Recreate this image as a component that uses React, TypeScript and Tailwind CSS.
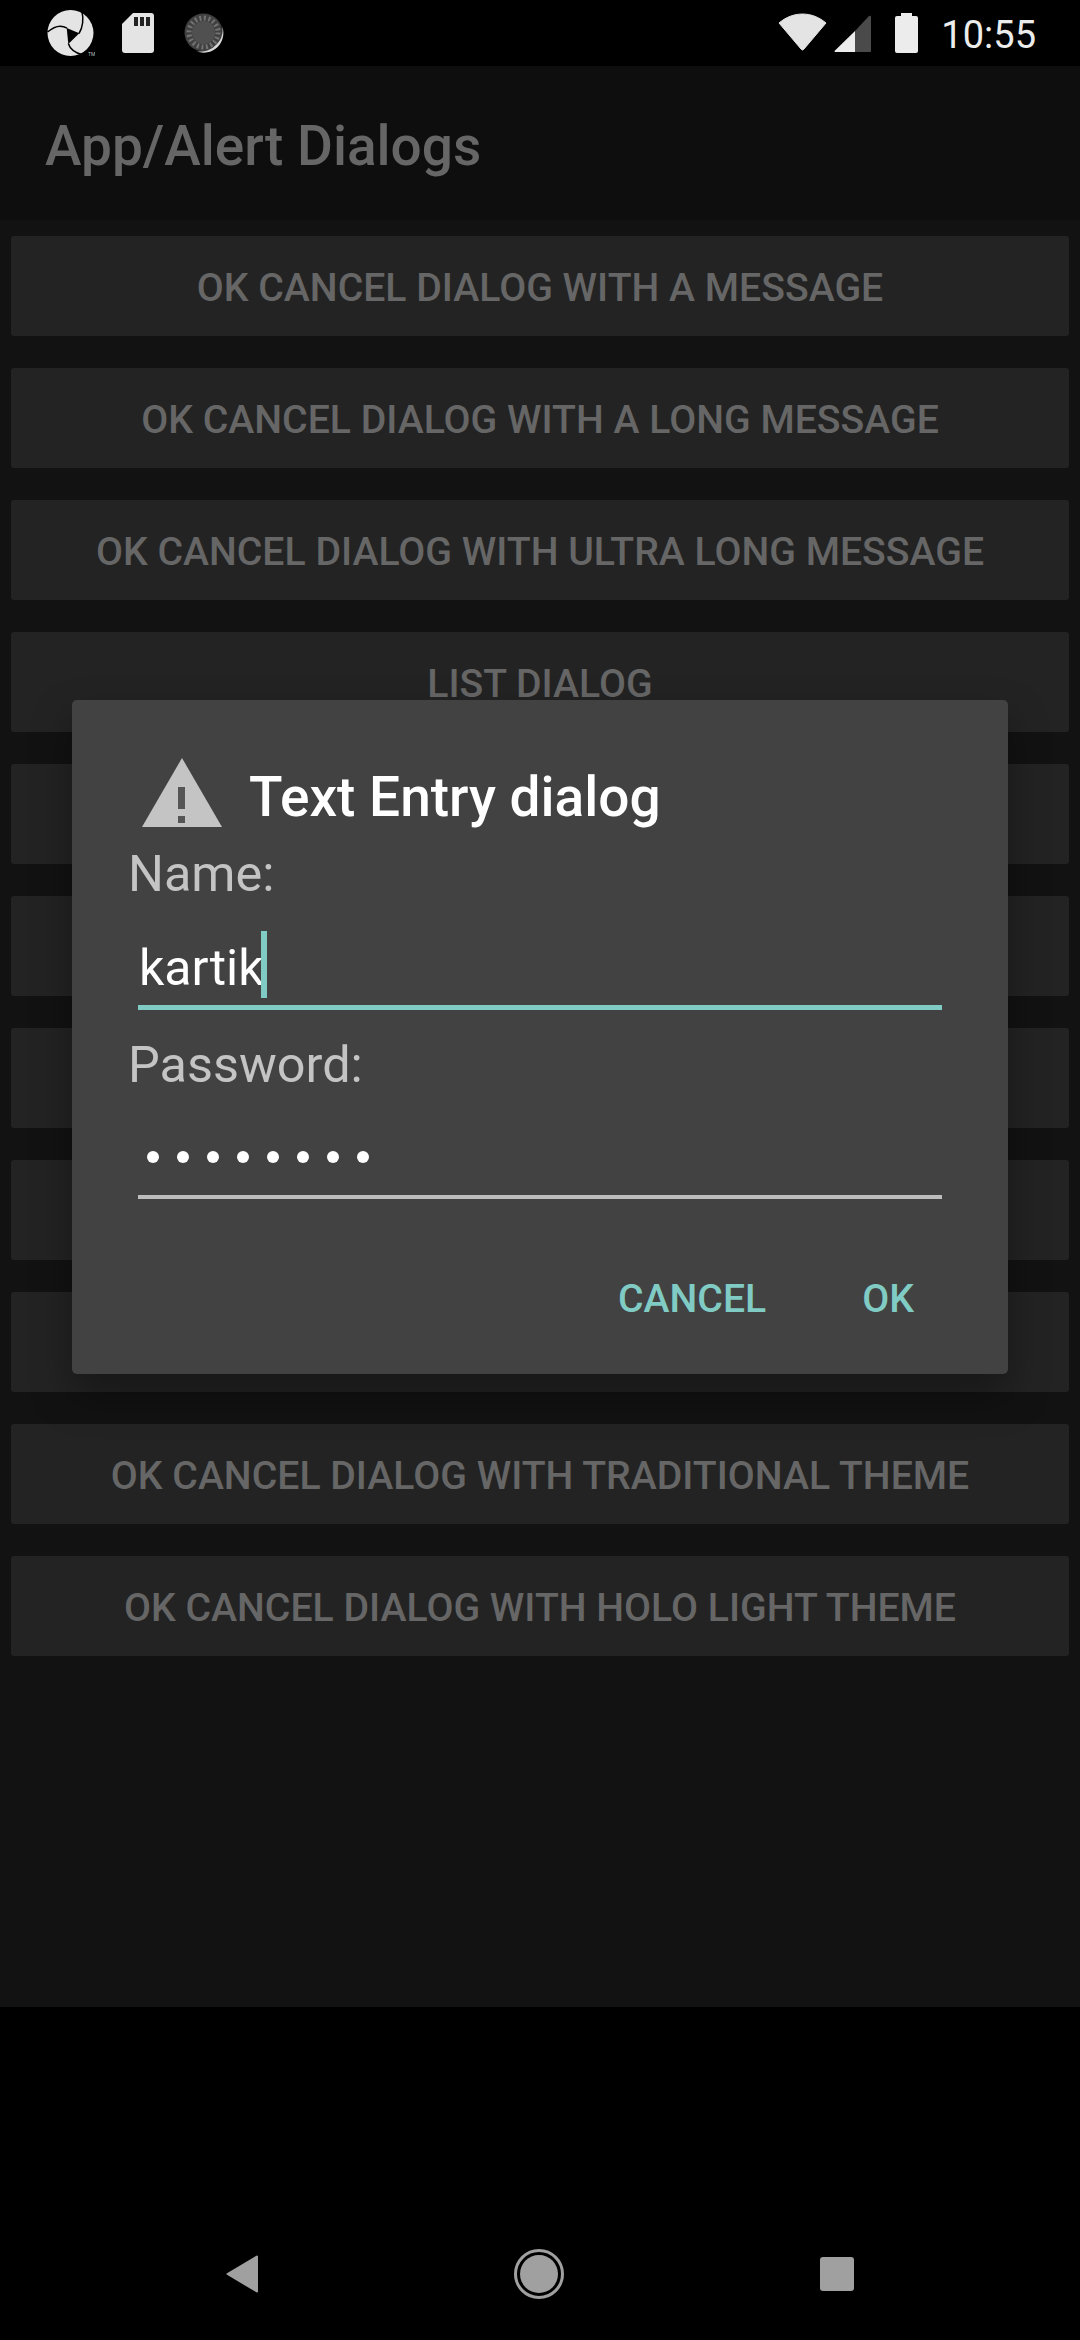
import React from 'react';

// labels 5-9 sit behind the dialog, so those buttons stay empty
const BUTTONS = [
  'OK Cancel dialog with a message',
  'OK Cancel dialog with a long message',
  'OK Cancel dialog with ultra long message',
  'List dialog',
  '',
  '',
  '',
  '',
  '',
  'OK Cancel dialog with traditional theme',
  'OK Cancel dialog with Holo Light theme',
];

function StatusBar() {
  return (
    <div className="flex h-[66px] items-center justify-between bg-black pl-[47px] pr-[44px]">
      <div className="flex items-center">
        {/* app logo */}
        <svg width="48" height="48" viewBox="0 0 48 48">
          <circle cx="23.5" cy="24" r="23" fill="#e4e4e4" />
          <path d="M19.7 19 L32.3 24.3 L21.3 35 Z" fill="#000" />
          <path d="M32 24.5 C36 18 37 11 34.7 1" fill="none" stroke="#000" strokeWidth="1.5" />
          <path d="M20 19.2 C14 15.5 8 16.5 0.5 23" fill="none" stroke="#000" strokeWidth="1.5" />
          <path d="M21.3 34.5 C23 40 28 44 36 46" fill="none" stroke="#000" strokeWidth="1.5" />
          <text x="41" y="47" fontSize="5" fill="#bbb" fontFamily="Roboto, sans-serif">TM</text>
        </svg>
        {/* sd card */}
        <svg width="32" height="40" viewBox="0 0 32 40" className="ml-[27px]">
          <path d="M11 0 H29 a3 3 0 0 1 3 3 V37 a3 3 0 0 1 -3 3 H3 a3 3 0 0 1 -3 -3 V11 Z" fill="#e4e4e4" />
          <rect x="12" y="4" width="4" height="9" fill="#222" />
          <rect x="18" y="4" width="4" height="9" fill="#222" />
          <rect x="24" y="4" width="4" height="9" fill="#222" />
        </svg>
        {/* spinner */}
        <svg width="40" height="40" viewBox="0 0 40 40" className="ml-[30px]">
          <circle cx="19.5" cy="19.5" r="19" fill="#404040" />
          <circle cx="19.5" cy="19.5" r="14.5" fill="none" stroke="#727272" strokeWidth="5" strokeDasharray="2 2.55" />
          <circle cx="19.5" cy="19.5" r="11.5" fill="#505050" />
          <path d="M38 13 A19.5 19.5 0 0 1 12 38 A21 21 0 0 0 33 31 A20 20 0 0 0 38 13 Z" fill="#d8d8d8" />
        </svg>
      </div>
      <div className="flex items-center">
        {/* wifi */}
        <svg width="49" height="38" viewBox="0 0 49 38" className="mt-[-2px]">
          <path d="M1 10 C15 -2 34 -2 48 10 L26 36 Q24.5 38 23 36 Z" fill="#e4e4e4" stroke="#e4e4e4" strokeWidth="1" strokeLinejoin="round" />
        </svg>
        {/* signal */}
        <svg width="37" height="37" viewBox="0 0 37 37" className="ml-[7px]">
          <path d="M21 16 L35 1 Q37 0 37 2 V36 Q37 37 36 37 H21 Z" fill="#4a4a4a" />
          <path d="M21 16 V37 H1 Q0 37 1 35.5 Z" fill="#ececec" />
        </svg>
        {/* battery */}
        <svg width="23" height="40" viewBox="0 0 23 40" className="ml-[24px]">
          <path d="M6 0 H17 V3 H21 a2 2 0 0 1 2 2 V38 a2 2 0 0 1 -2 2 H2 a2 2 0 0 1 -2 -2 V5 a2 2 0 0 1 2 -2 H6 Z" fill="#ececec" />
        </svg>
        <span className="ml-[23px] mt-[3px] text-[38px] leading-[44px] text-[#ececec]">10:55</span>
      </div>
    </div>
  );
}

function NavBar() {
  return (
    <div className="flex h-[333px] items-start justify-center bg-black pt-[242px]">
      <div className="flex w-[628px] items-center justify-between">
        <svg width="32" height="38" viewBox="0 0 32 38">
          <path d="M31 1.5 L1.5 19 L31 36.5 Z" fill="#a0a0a0" stroke="#a0a0a0" strokeWidth="2" strokeLinejoin="round" />
        </svg>
        <svg width="50" height="50" viewBox="0 0 50 50">
          <circle cx="25" cy="25" r="23.5" fill="none" stroke="#a0a0a0" strokeWidth="3" />
          <circle cx="25" cy="25" r="19" fill="#a0a0a0" />
        </svg>
        <div className="h-[34px] w-[34px] rounded-[3px] bg-[#a0a0a0]" />
      </div>
    </div>
  );
}

function TextEntryDialog() {
  return (
    <div className="absolute left-[72px] top-[700px] flex h-[674px] w-[936px] flex-col rounded-[5px] bg-[#424242] shadow-[0_20px_40px_rgba(0,0,0,0.35)]">
      <div className="flex items-start pl-[70px] pt-[58px]">
        <svg width="80" height="70" viewBox="0 0 80 70">
          <path d="M0 69 L40 0 L80 69 Z" fill="#c4c4c4" />
          <rect x="36" y="29" width="7" height="22" fill="#555" />
          <rect x="36" y="58" width="7" height="7" fill="#555" />
        </svg>
        <span className="ml-[27px] mt-[4px] text-[55px] font-medium leading-[70px] text-white">Text Entry dialog</span>
      </div>

      <div className="mt-[14px] pl-[56px] text-[50.4px] leading-[56px] text-[#c4c4c4]">Name:</div>
      <div className="mx-[66px] mt-[22px] flex h-[81px] items-center pl-[1px]">
        <span className="mt-[6px] text-[50px] leading-[66px] text-white">kartik</span>
        <span className="ml-[-3px] h-[67px] w-[6px] bg-[#80cbc4]" />
      </div>
      <div className="mx-[66px] h-[5px] bg-[#80cbc4]" />

      <div className="mt-[27px] pl-[56px] text-[50.4px] leading-[56px] text-[#c4c4c4]">Password:</div>
      <div className="mx-[66px] mt-[20px] flex h-[82px] items-center pl-[9px]">
        <div className="mt-[6px] flex gap-[18px]">
          {Array.from({ length: 8 }).map((_, i) => (
            <span key={i} className="h-[12px] w-[12px] rounded-full bg-white" />
          ))}
        </div>
      </div>
      <div className="mx-[66px] h-[4px] bg-[#bdbdbd]" />

      <div className="mt-[78px] flex justify-end pr-[94px] text-[39.2px] font-medium leading-[44px] text-[#80cbc4]">
        <span>CANCEL</span>
        <span className="ml-[96px]">OK</span>
      </div>
    </div>
  );
}

export default function App() {
  return (
    <div className="relative h-[2340px] w-[1080px] overflow-hidden bg-black font-['Roboto',sans-serif]">
      <StatusBar />
      <div className="flex h-[154px] items-center bg-[#0e0e0e] pl-[45px]">
        <span className="mt-[6px] text-[55px] font-medium text-[#666666]">App/Alert Dialogs</span>
      </div>
      <div className="flex h-[1787px] flex-col gap-[32px] bg-[#121212] px-[11px] pt-[16px]">
        {BUTTONS.map((label, i) => (
          <div
            key={i}
            className="flex h-[100px] items-center justify-center rounded-[3px] bg-[#232323] pt-[4px] text-[39.2px] font-medium uppercase text-[#666666]"
          >
            {label}
          </div>
        ))}
      </div>
      <NavBar />
      <TextEntryDialog />
    </div>
  );
}
